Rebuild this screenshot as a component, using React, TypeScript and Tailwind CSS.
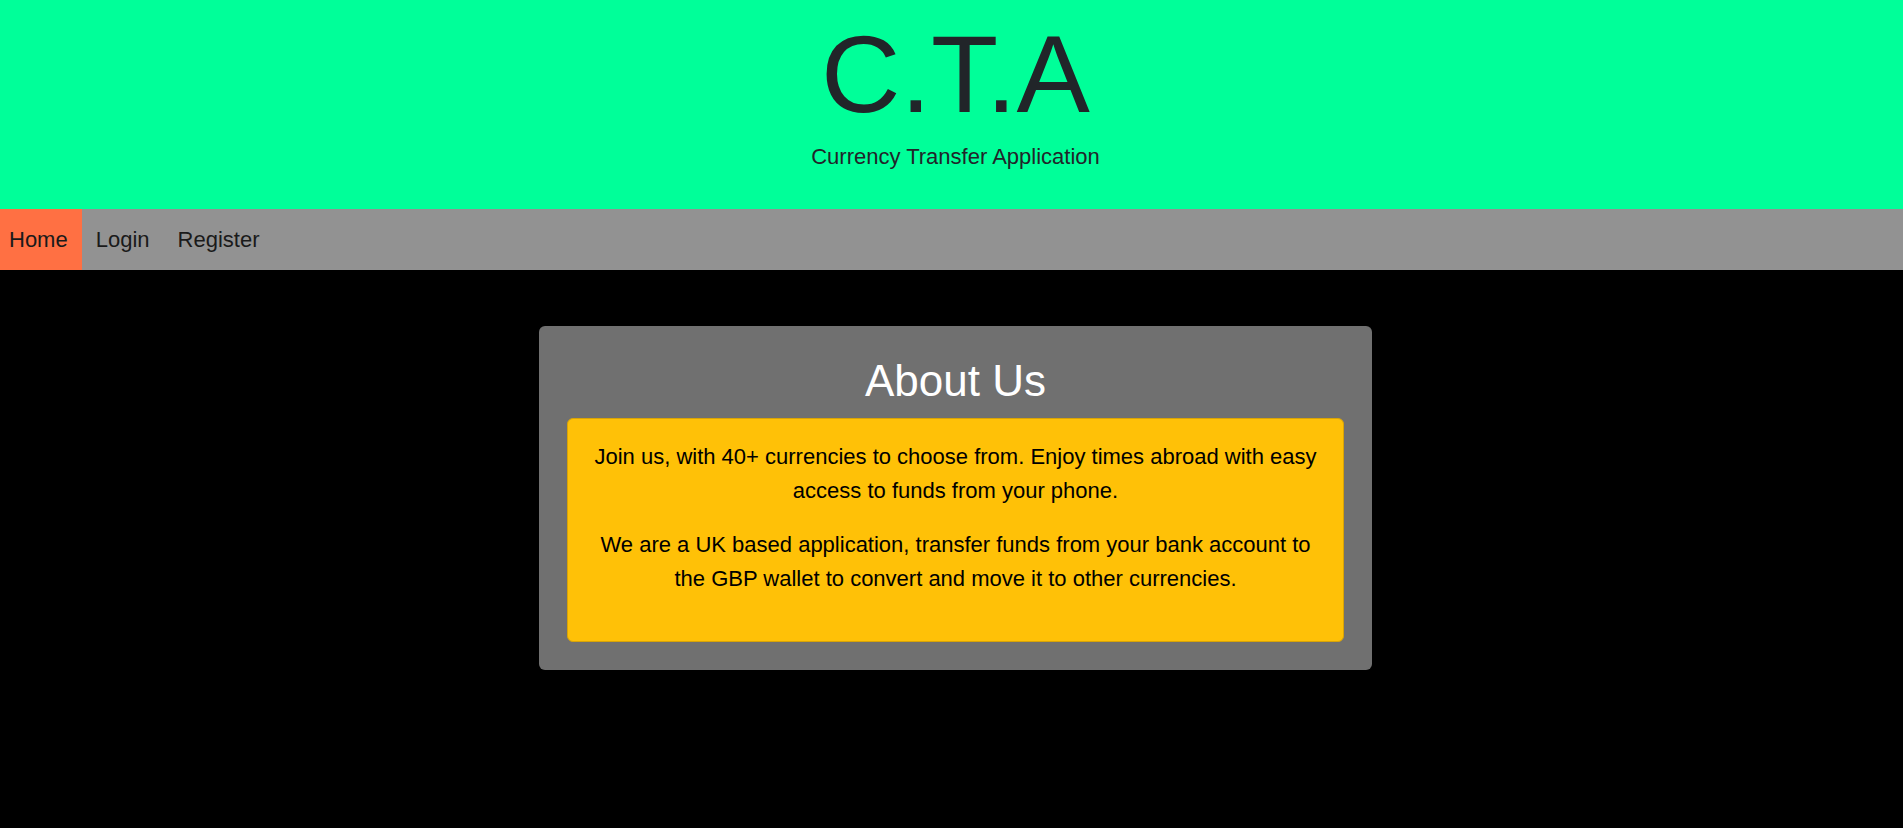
import React from "react";

const links = [
  { label: "Home", active: true },
  { label: "Login", active: false },
  { label: "Register", active: false },
];

export default function App() {
  return (
    <div className="min-h-[828px] bg-black font-['Liberation_Sans',Arial,sans-serif] text-[#212529]">
      <header className="bg-[#00ff99] pl-[8px] pt-[7px] pb-[36px] text-center">
        <h1 className="text-[110px] leading-[133px] font-light">C.T.A</h1>
        <p className="text-[22px] leading-[33px]">Currency Transfer Application</p>
      </header>

      <nav className="flex bg-[#929292] text-[22px] leading-[33px]">
        {links.map((l) => (
          <a
            key={l.label}
            href="#"
            className={
              l.active
                ? "bg-[#ff7043] py-[14px] pl-[9px] pr-[14px] text-[#1a1a1a]"
                : "py-[14px] px-[14px] text-[#1a1a1a]"
            }
          >
            {l.label}
          </a>
        ))}
      </nav>

      <main className="flex justify-center pl-[8px] pt-[56px]">
        <section className="w-[833px] rounded-[6px] bg-[#707070] px-[28px] pt-[28px] pb-[28px]">
          <h2 className="mb-[11px] text-center text-[44px] leading-[53px] text-white">About Us</h2>
          <div className="rounded-[6px] border border-[#d9a406] bg-[#ffc107] px-[19px] pt-[21px] pb-[45px] text-center text-[22px] leading-[34px] text-black">
            <p className="mb-[20px]">
              Join us, with 40+ currencies to choose from. Enjoy times abroad with easy access to funds from your phone.
            </p>
            <p>
              We are a UK based application, transfer funds from your bank account to the GBP wallet to convert and move it to other currencies.
            </p>
          </div>
        </section>
      </main>
    </div>
  );
}
